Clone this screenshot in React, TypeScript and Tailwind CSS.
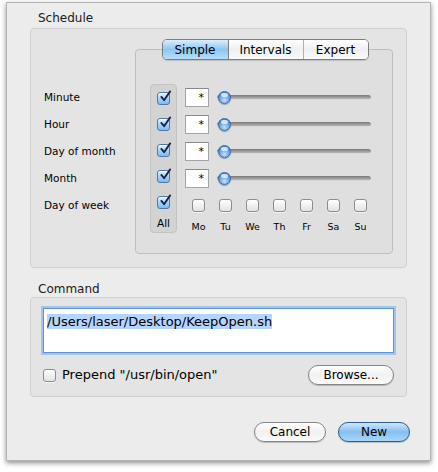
import React from 'react';

const font = { fontFamily: '"DejaVu Sans", "Liberation Sans", sans-serif' };

const CheckBox: React.FC<{ checked?: boolean }> = ({ checked }) =>
  checked ? (
    <span className="relative inline-block w-[13px] h-[13px] rounded-[3px] border border-[#5477a3] bg-gradient-to-b from-[#e4f2fd] via-[#a9d3f5] to-[#7cbcee] shadow-[inset_0_1px_0_rgba(255,255,255,0.8)]">
      <svg viewBox="0 0 14 14" className="absolute -top-[3px] left-[1px] w-[13px] h-[13px]">
        <path d="M2.5 7.5 L5.5 11 L12 1.5" fill="none" stroke="#14244a" strokeWidth="2" strokeLinecap="round" strokeLinejoin="round" />
      </svg>
    </span>
  ) : (
    <span className="inline-block w-[13px] h-[13px] rounded-[3px] border border-[#8d8d8d] bg-gradient-to-b from-white to-[#e2e2e2] shadow-[0_1px_0_rgba(255,255,255,0.6)]" />
  );

const Slider: React.FC = () => (
  <div className="relative w-[154px] h-[13px] flex items-center">
    <div className="w-full h-[5px] rounded-full bg-gradient-to-b from-[#7a7a7a] to-[#b8b8b8] border-b border-[#d8d8d8]" />
    <div className="absolute left-[1px] top-[0px] w-[13px] h-[13px] rounded-full border border-[#3c67a0] bg-[radial-gradient(circle_at_50%_75%,#bfe2ff_0%,#5d9ee4_55%,#2f6bbb_100%)] shadow-[0_1px_1px_rgba(0,0,0,0.3)]">
      <div className="mx-auto mt-[1px] w-[7px] h-[4px] rounded-full bg-white/70" />
    </div>
  </div>
);

const Field: React.FC = () => (
  <div className="w-[24px] h-[19px] bg-white border border-[#a4a4a4] border-t-[#8a8a8a] flex items-center justify-end pr-[4px] text-[11px] text-black leading-none">
    *
  </div>
);

const GroupBox: React.FC<{ children: React.ReactNode; className?: string }> = ({ children, className }) => (
  <div className={`rounded-[4px] border border-[#d0d0d0] bg-[#e4e4e4] ${className ?? ''}`}>{children}</div>
);

const PillButton: React.FC<{ label: string; primary?: boolean; className?: string }> = ({ label, primary, className }) => (
  <div
    className={`h-[20px] rounded-full flex items-center justify-center text-[12px] text-black border ${
      primary
        ? 'border-[#2f5a92] bg-gradient-to-b from-[#cde7fd] via-[#86bff0] to-[#a9d6fa]'
        : 'border-[#858585] bg-gradient-to-b from-white via-[#f1f1f1] to-[#fbfbfb]'
    } shadow-[0_1px_1px_rgba(0,0,0,0.2)] ${className ?? ''}`}
  >
    {label}
  </div>
);

const rows = ['Minute', 'Hour', 'Day of month', 'Month', 'Day of week'];
const days = ['Mo', 'Tu', 'We', 'Th', 'Fr', 'Sa', 'Su'];

export default function App() {
  return (
    <div className="w-[438px] h-[472px] bg-white pl-[6px] pt-[2px]" style={font}>
      <div className="w-[425px] h-[459px] bg-[#ececec] border border-[#b5b5b5] shadow-[0_2px_5px_rgba(0,0,0,0.45)] flex flex-col px-[23px]">
        {/* Schedule */}
        <div className="text-[12px] text-[#1a1a1a] pl-[8px] pt-[8px] h-[25px] leading-[15px]">Schedule</div>
        <GroupBox className="h-[240px] flex">
          <div className="w-[104px] pl-[13px] pt-[55px] flex flex-col">
            {rows.map((r) => (
              <div key={r} className="h-[27px] flex items-center text-[10.5px] text-black">
                {r}
              </div>
            ))}
          </div>
          <div className="flex flex-col pt-[10px]">
            <div className="relative z-10 self-center ml-[2px] flex h-[21px] rounded-[5px] border border-[#7d7d7d] overflow-hidden text-[12px] text-black shadow-[0_1px_1px_rgba(0,0,0,0.15)]">
              <div className="w-[66px] flex items-center justify-center bg-gradient-to-b from-[#d9eefe] via-[#8cc6f3] to-[#b8defb] border-r border-[#7d7d7d]">Simple</div>
              <div className="w-[75px] flex items-center justify-center bg-gradient-to-b from-white via-[#f0f0f0] to-[#fafafa] border-r border-[#b0b0b0]">Intervals</div>
              <div className="w-[64px] flex items-center justify-center bg-gradient-to-b from-white via-[#f0f0f0] to-[#fafafa]">Expert</div>
            </div>
            <div className="-mt-[11px] w-[258px] h-[205px] rounded-[4px] border border-[#bdbdbd] bg-[#dfdfdf] flex pl-[14px] pt-[34px]">
              <div className="w-[27px] h-[149px] rounded-[4px] border border-[#c3c3c3] bg-[#d3d3d3] flex flex-col items-center">
                {rows.map((r) => (
                  <div key={r} className="h-[27px] flex items-center">
                    <CheckBox checked />
                  </div>
                ))}
                <div className="h-[17px] flex items-center text-[10.5px] text-black">All</div>
              </div>
              <div className="ml-[8px] flex flex-col">
                {rows.slice(0, 4).map((r) => (
                  <div key={r} className="h-[27px] flex items-center gap-[8px]">
                    <Field />
                    <Slider />
                  </div>
                ))}
                <div className="h-[27px] flex">
                  {days.map((d) => (
                    <div key={d} className="w-[27px] flex items-center justify-center">
                      <CheckBox />
                    </div>
                  ))}
                </div>
                <div className="h-[17px] flex">
                  {days.map((d) => (
                    <div key={d} className="w-[27px] flex items-center justify-center text-[9.5px] text-black">
                      {d}
                    </div>
                  ))}
                </div>
              </div>
            </div>
          </div>
        </GroupBox>

        {/* Command */}
        <div className="text-[12px] text-[#1a1a1a] pl-[8px] pt-[14px] h-[29px] leading-[15px]">Command</div>
        <GroupBox className="h-[100px] flex flex-col px-[12px] pt-[10px]">
          <div className="h-[45px] bg-white border border-[#5e93d1] shadow-[0_0_0_2px_#a3c5ec] px-[3px] pt-[3px] leading-[17px]">
            <span className="bg-[#b5d5fe] text-[13px] text-black">/Users/laser/Desktop/KeepOpen.sh</span>
          </div>
          <div className="mt-[12px] flex items-center">
            <CheckBox />
            <span className="ml-[6px] text-[13px] text-black">Prepend "/usr/bin/open"</span>
            <PillButton label="Browse..." className="ml-auto w-[86px]" />
          </div>
        </GroupBox>

        <div className="mt-[25px] flex justify-end gap-[12px] -mr-[3px]">
          <PillButton label="Cancel" className="w-[72px]" />
          <PillButton label="New" primary className="w-[72px]" />
        </div>
      </div>
    </div>
  );
}
